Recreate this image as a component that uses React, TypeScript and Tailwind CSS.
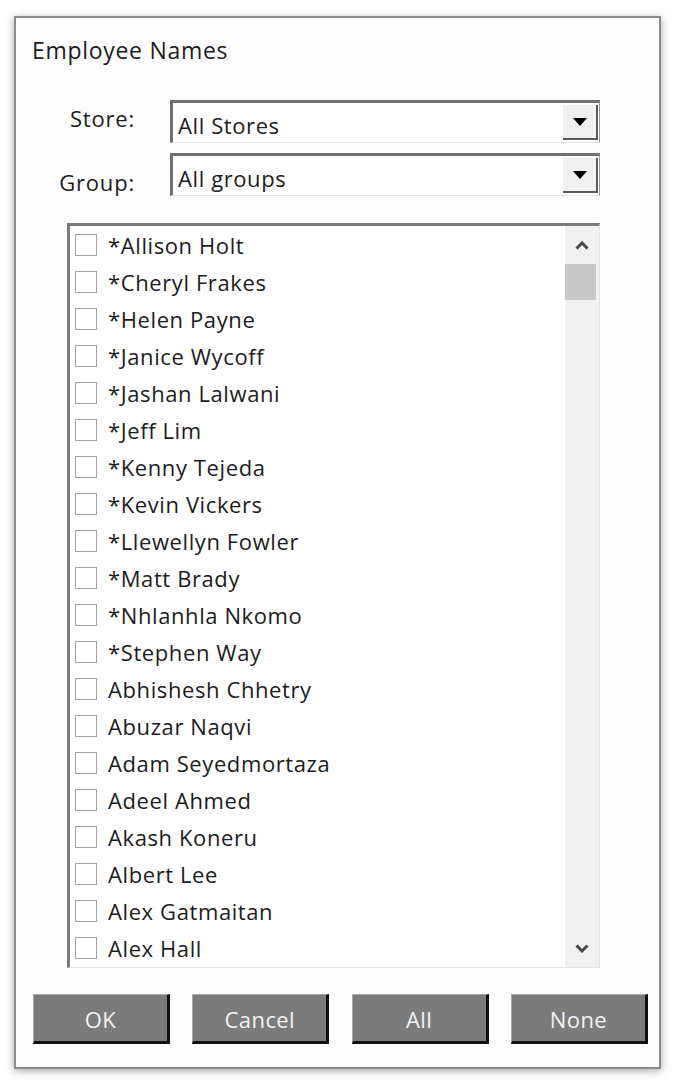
import React from "react";

const names = [
  "*Allison Holt",
  "*Cheryl Frakes",
  "*Helen Payne",
  "*Janice Wycoff",
  "*Jashan Lalwani",
  "*Jeff Lim",
  "*Kenny Tejeda",
  "*Kevin Vickers",
  "*Llewellyn Fowler",
  "*Matt Brady",
  "*Nhlanhla Nkomo",
  "*Stephen Way",
  "Abhishesh Chhetry",
  "Abuzar Naqvi",
  "Adam Seyedmortaza",
  "Adeel Ahmed",
  "Akash Koneru",
  "Albert Lee",
  "Alex Gatmaitan",
  "Alex Hall",
];

const font = { fontFamily: '"Open Sans", "Noto Sans", sans-serif' };

// combo box with the sunken frame and a raised arrow button
const Combo = ({ value }: { value: string }) => (
  <div className="flex h-[43px] w-[430px] items-stretch border-t-[3px] border-l-[3px] border-r border-b border-t-[#707070] border-l-[#707070] border-r-[#9a9a9a] border-b-[#e2e2e2] bg-white">
    <div className="flex flex-1 items-center pl-[5px] pt-[5px] text-[22px] tracking-[0.6px] text-[#1c1c1c]">{value}</div>
    <div className="my-[2px] mr-[1px] flex w-[35px] items-center justify-center border-b-2 border-r-2 border-b-[#5a5a5a] border-r-[#5a5a5a] bg-[#f0f0f0]">
      <svg width="14" height="8" viewBox="0 0 14 8">
        <path d="M0 0 H14 L7 8 Z" fill="#000" />
      </svg>
    </div>
  </div>
);

const Btn = ({ label }: { label: string }) => (
  <button className="flex h-[50px] w-[137px] items-center justify-center border-t border-l border-b-[3px] border-r-[3px] border-t-[#a8a8a8] border-l-[#a8a8a8] border-b-[#111] border-r-[#111] bg-[#7b7b7b] pt-[2px] text-[22px] tracking-[0.4px] text-[#f3f3f3]">
    {label}
  </button>
);

export default function App() {
  return (
    <div className="h-[1088px] w-[676px] bg-white pl-[14px] pt-[16px]" style={font}>
      <div className="flex h-[1053px] w-[647px] flex-col border-2 border-[#8c8c8c] bg-[#fdfdfd] shadow-[0_2px_8px_rgba(0,0,0,0.35)]">
        {/* title */}
        <div className="mt-[18px] pl-[16px] text-[23px] leading-[28px] tracking-[0.7px] text-[#1c1c1c]">Employee Names</div>

        {/* filters */}
        <div className="mt-[36px] flex flex-col gap-[10px]">
          <div className="flex">
            <div className="flex h-[43px] w-[119px] items-center justify-end pb-[7px] text-[22px] tracking-[0.8px] text-[#1c1c1c]">Store:</div>
            <div className="ml-[35px]">
              <Combo value="All Stores" />
            </div>
          </div>
          <div className="flex">
            <div className="flex h-[43px] w-[119px] items-center justify-end pt-[15px] text-[22px] tracking-[0.8px] text-[#1c1c1c]">Group:</div>
            <div className="ml-[35px]">
              <Combo value="All groups" />
            </div>
          </div>
        </div>

        {/* employee list */}
        <div className="ml-[51px] mt-[27px] flex h-[745px] w-[533px] border-t-[3px] border-l-[3px] border-r border-b border-t-[#7a7a7a] border-l-[#7a7a7a] border-r-[#e3e3e3] border-b-[#e3e3e3] bg-white">
          <div className="flex-1 overflow-hidden">
            {names.map((n) => (
              <div key={n} className="flex h-[37px] items-center pl-[5px]">
                <div className="h-[22px] w-[22px] border-[1.5px] border-[#a3a3a3] bg-white" />
                <span className="ml-[11px] pt-[1px] text-[22px] tracking-[0.6px] text-[#1c1c1c]">{n}</span>
              </div>
            ))}
          </div>
          <div className="flex w-[34px] flex-col items-center bg-[#f0f0f0]">
            <div className="flex h-[38px] w-full items-center justify-center">
              <svg width="14" height="9" viewBox="0 0 14 9">
                <path d="M1.5 7.5 L7 2 L12.5 7.5" fill="none" stroke="#4a4a4a" strokeWidth="3" />
              </svg>
            </div>
            <div className="mr-[2px] h-[36px] w-[31px] self-start bg-[#c8c8c8]" />
            <div className="flex-1" />
            <div className="flex h-[38px] w-full items-center justify-center">
              <svg width="14" height="9" viewBox="0 0 14 9">
                <path d="M1.5 1.5 L7 7 L12.5 1.5" fill="none" stroke="#4a4a4a" strokeWidth="3" />
              </svg>
            </div>
          </div>
        </div>

        {/* buttons */}
        <div className="ml-[17px] mt-[26px] flex w-[615px] justify-between">
          <Btn label="OK" />
          <Btn label="Cancel" />
          <Btn label="All" />
          <Btn label="None" />
        </div>
      </div>
    </div>
  );
}
